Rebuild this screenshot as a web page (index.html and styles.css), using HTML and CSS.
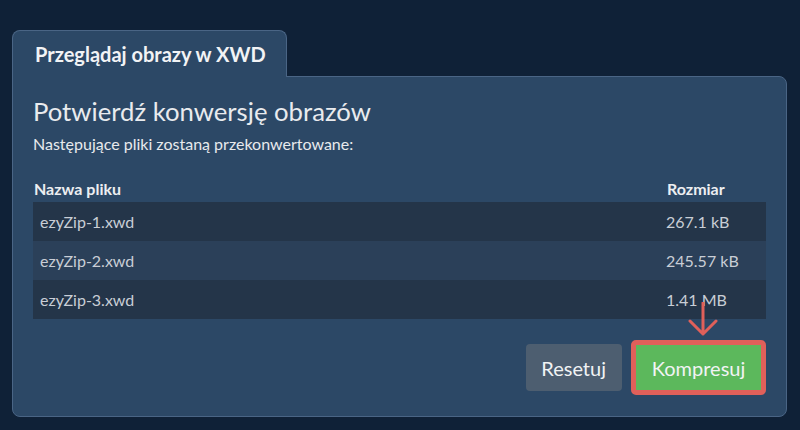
FILE: index.html
```html
<!DOCTYPE html>
<html lang="pl">
<head>
<meta charset="utf-8">
<link rel="stylesheet" href="styles.css">
</head>
<body>
<div class="wrap">
  <div class="tabs"><div class="tab">Przeglądaj obrazy w XWD</div></div>
  <div class="panel">
    <h1 class="title">Potwierdź konwersję obrazów</h1>
    <p class="sub">Następujące pliki zostaną przekonwertowane:</p>
    <div class="table">
      <div class="thead">
        <div class="th name">Nazwa pliku</div>
        <div class="th size">Rozmiar</div>
      </div>
      <div class="row odd"><div class="td name">ezyZip-1.xwd</div><div class="td size">267.1 kB</div></div>
      <div class="row even"><div class="td name">ezyZip-2.xwd</div><div class="td size">245.57 kB</div></div>
      <div class="row odd"><div class="td name">ezyZip-3.xwd</div><div class="td size">1.41 MB</div></div>
    </div>
    <div class="actions">
      <button class="btn reset">Resetuj</button>
      <div class="highlight">
        <svg class="arrow" width="30" height="34" viewBox="0 0 30 34"><path d="M15 1 V32 M2 19 L15 32 L28 19" fill="none" stroke="#e0605a" stroke-width="3" stroke-linecap="round" stroke-linejoin="round"/></svg>
        <button class="btn go">Kompresuj</button>
      </div>
    </div>
  </div>
</div>
</body>
</html>
```
FILE: styles.css
```css
* { box-sizing: border-box; }
html, body { margin: 0; padding: 0; }
body {
  background: #0f2137;
  font-family: Lato, "Noto Sans", sans-serif;
  width: 800px;
  height: 430px;
  overflow: hidden;
}
.wrap { padding: 30px 13px 15px 12px; }
.tabs { display: flex; }
.tab {
  position: relative;
  z-index: 1;
  margin-bottom: -1px;
  height: 47px;
  padding: 0 20px 0 22px;
  display: flex;
  align-items: center;
  background: #2c4866;
  border: 1px solid #4a6585;
  border-bottom: none;
  border-radius: 8px 8px 0 0;
  color: #f2f3f5;
  font-weight: 700;
  font-size: 20px;
}
.panel {
  background: #2c4866;
  border: 1px solid #4a6585;
  border-radius: 0 8px 8px 8px;
  padding: 19px 20px 21px 20px;
}
.title {
  margin: 0;
  font-weight: 400;
  font-size: 25.7px;
  line-height: 30px;
  color: #e9ebee;
}
.sub {
  margin: 8px 0 0 0;
  font-size: 16px;
  line-height: 20px;
  color: #e8eaed;
}
.table { margin-top: 25px; }
.thead, .row {
  display: grid;
  grid-template-columns: 1fr 100px;
}
.thead { padding-bottom: 3px; }
.th {
  font-weight: 700;
  font-size: 16px;
  line-height: 20px;
  color: #eceef1;
}
.th.name { padding-left: 1px; }
.th.size { padding-left: 1px; }
.row { height: 39px; align-items: center; }
.row.odd { background: #243549; }
.row.even { background: #2b4059; }
.td { font-size: 16px; color: #c9ced6; }
.td.name { padding-left: 7px; }
.actions {
  margin-top: 21px;
  display: flex;
  justify-content: flex-end;
  align-items: center;
  gap: 9px;
}
.btn {
  font-family: Lato, "Noto Sans", sans-serif;
  font-size: 20px;
  border: none;
  color: #f1f3f4;
  cursor: pointer;
}
.reset {
  height: 47px;
  padding: 0 16px 0 15px;
  background: #4d5e70;
  border-radius: 4px;
}
.highlight {
  position: relative;
  border: 5px solid #e0605a;
  border-radius: 5px;
  display: flex;
}
.go {
  height: 45px;
  width: 125px;
  background: #5cb85c;
}
.arrow {
  position: absolute;
  left: 52px;
  top: -43px;
}
```
